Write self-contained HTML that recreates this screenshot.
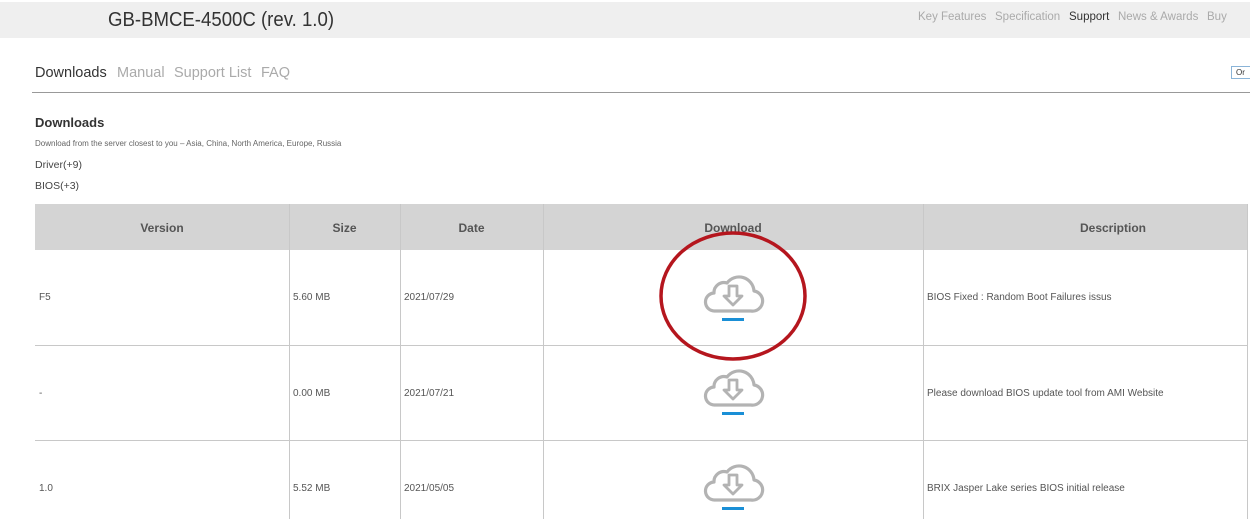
<!DOCTYPE html>
<html><head><meta charset="utf-8"><style>
*{margin:0;padding:0;box-sizing:border-box}
body{width:1250px;height:519px;overflow:hidden;background:#fff;font-family:"Liberation Sans",Arial,sans-serif;position:relative;color:#333}
.a{position:absolute;white-space:nowrap}
.top{position:absolute;left:0;top:2px;width:1250px;height:36px;background:#efefef}
.title{left:108px;top:9px;font-size:20px;color:#333;transform:scaleX(0.93);transform-origin:0 0}
.nav{top:11px;font-size:11.5px;color:#aaa}
.sub{top:65px;font-size:14.5px;color:#aaa}
.hl{position:absolute;background:#c8c8c8;height:1px}
.vl{position:absolute;background:#c8c8c8;width:1px;top:204px;height:315px}
.th{position:absolute;top:204px;height:46px;background:#d4d4d4}
.hc{top:221px;font-size:12px;font-weight:bold;color:#555;text-align:center}
.td{font-size:10px;color:#555}
.bar{position:absolute;left:722px;width:22px;height:3px;background:#1a8fd6}
</style></head><body>
<div class="top"></div>
<div class="a title">GB-BMCE-4500C (rev. 1.0)</div>
<div class="a nav" style="left:918px">Key Features</div>
<div class="a nav" style="left:995px">Specification</div>
<div class="a nav" style="left:1069px;color:#333">Support</div>
<div class="a nav" style="left:1118px">News &amp; Awards</div>
<div class="a nav" style="left:1207px">Buy</div>

<div class="a sub" style="left:35px;color:#333">Downloads</div>
<div class="a sub" style="left:117px">Manual</div>
<div class="a sub" style="left:174px">Support List</div>
<div class="a sub" style="left:261px">FAQ</div>
<div class="a" style="left:1231px;top:66px;width:22px;height:13px;border:1px solid #8ab4d8;font-size:8px;padding-left:4px;line-height:11px">Or</div>
<div class="hl" style="left:32px;top:92px;width:1218px;background:#999"></div>

<div class="a" style="left:35px;top:115px;font-size:13px;font-weight:bold">Downloads</div>
<div class="a" style="left:35px;top:139px;font-size:8px;color:#666">Download from the server closest to you – Asia, China, North America, Europe, Russia</div>
<div class="a" style="left:35px;top:159px;font-size:10.5px;color:#444">Driver(+9)</div>
<div class="a" style="left:35px;top:180px;font-size:10.5px;color:#444">BIOS(+3)</div>

<div class="th" style="left:35px;width:1212px"></div>
<div class="vl" style="left:289px"></div>
<div class="vl" style="left:400px"></div>
<div class="vl" style="left:543px"></div>
<div class="vl" style="left:923px"></div>
<div class="vl" style="left:1247px"></div>
<div class="hl" style="left:35px;top:345px;width:1212px"></div>
<div class="hl" style="left:35px;top:440px;width:1212px"></div>

<div class="a hc" style="left:35px;width:254px">Version</div>
<div class="a hc" style="left:289px;width:111px">Size</div>
<div class="a hc" style="left:400px;width:143px">Date</div>
<div class="a hc" style="left:543px;width:380px">Download</div>
<div class="a hc" style="left:923px;width:380px">Description</div>

<div class="a td" style="left:39px;top:292px">F5</div>
<div class="a td" style="left:293px;top:292px">5.60 MB</div>
<div class="a td" style="left:404px;top:292px">2021/07/29</div>
<div class="a td" style="left:927px;top:292px">BIOS Fixed : Random Boot Failures issus</div>

<div class="a td" style="left:39px;top:388px">-</div>
<div class="a td" style="left:293px;top:388px">0.00 MB</div>
<div class="a td" style="left:404px;top:388px">2021/07/21</div>
<div class="a td" style="left:927px;top:388px">Please download BIOS update tool from AMI Website</div>

<div class="a td" style="left:39px;top:483px">1.0</div>
<div class="a td" style="left:293px;top:483px">5.52 MB</div>
<div class="a td" style="left:404px;top:483px">2021/05/05</div>
<div class="a td" style="left:927px;top:483px">BRIX Jasper Lake series BIOS initial release</div>

<svg width="1250" height="519" style="position:absolute;left:0;top:0">
<defs><g id="c" fill="none" stroke="#b3b3b3" stroke-width="3.2" stroke-linejoin="round">
<path d="M11 37 H47 A10 10 0 0 0 50 17 A15 15 0 0 0 23 9 A10 10 0 0 0 10 19 A9 9 0 0 0 11 37 Z"/>
<path d="M25 12 H33 V22 H38 L29 31 L20 22 H25 Z" stroke-width="2.8"/>
</g></defs>
<use href="#c" x="704" y="274"/>
<use href="#c" x="704" y="368"/>
<use href="#c" x="704" y="463"/>
<ellipse cx="733" cy="296" rx="72" ry="63" fill="none" stroke="#b5161e" stroke-width="3.5"/>
</svg>
<div class="bar" style="top:318px"></div>
<div class="bar" style="top:412px"></div>
<div class="bar" style="top:507px"></div>
</body></html>
